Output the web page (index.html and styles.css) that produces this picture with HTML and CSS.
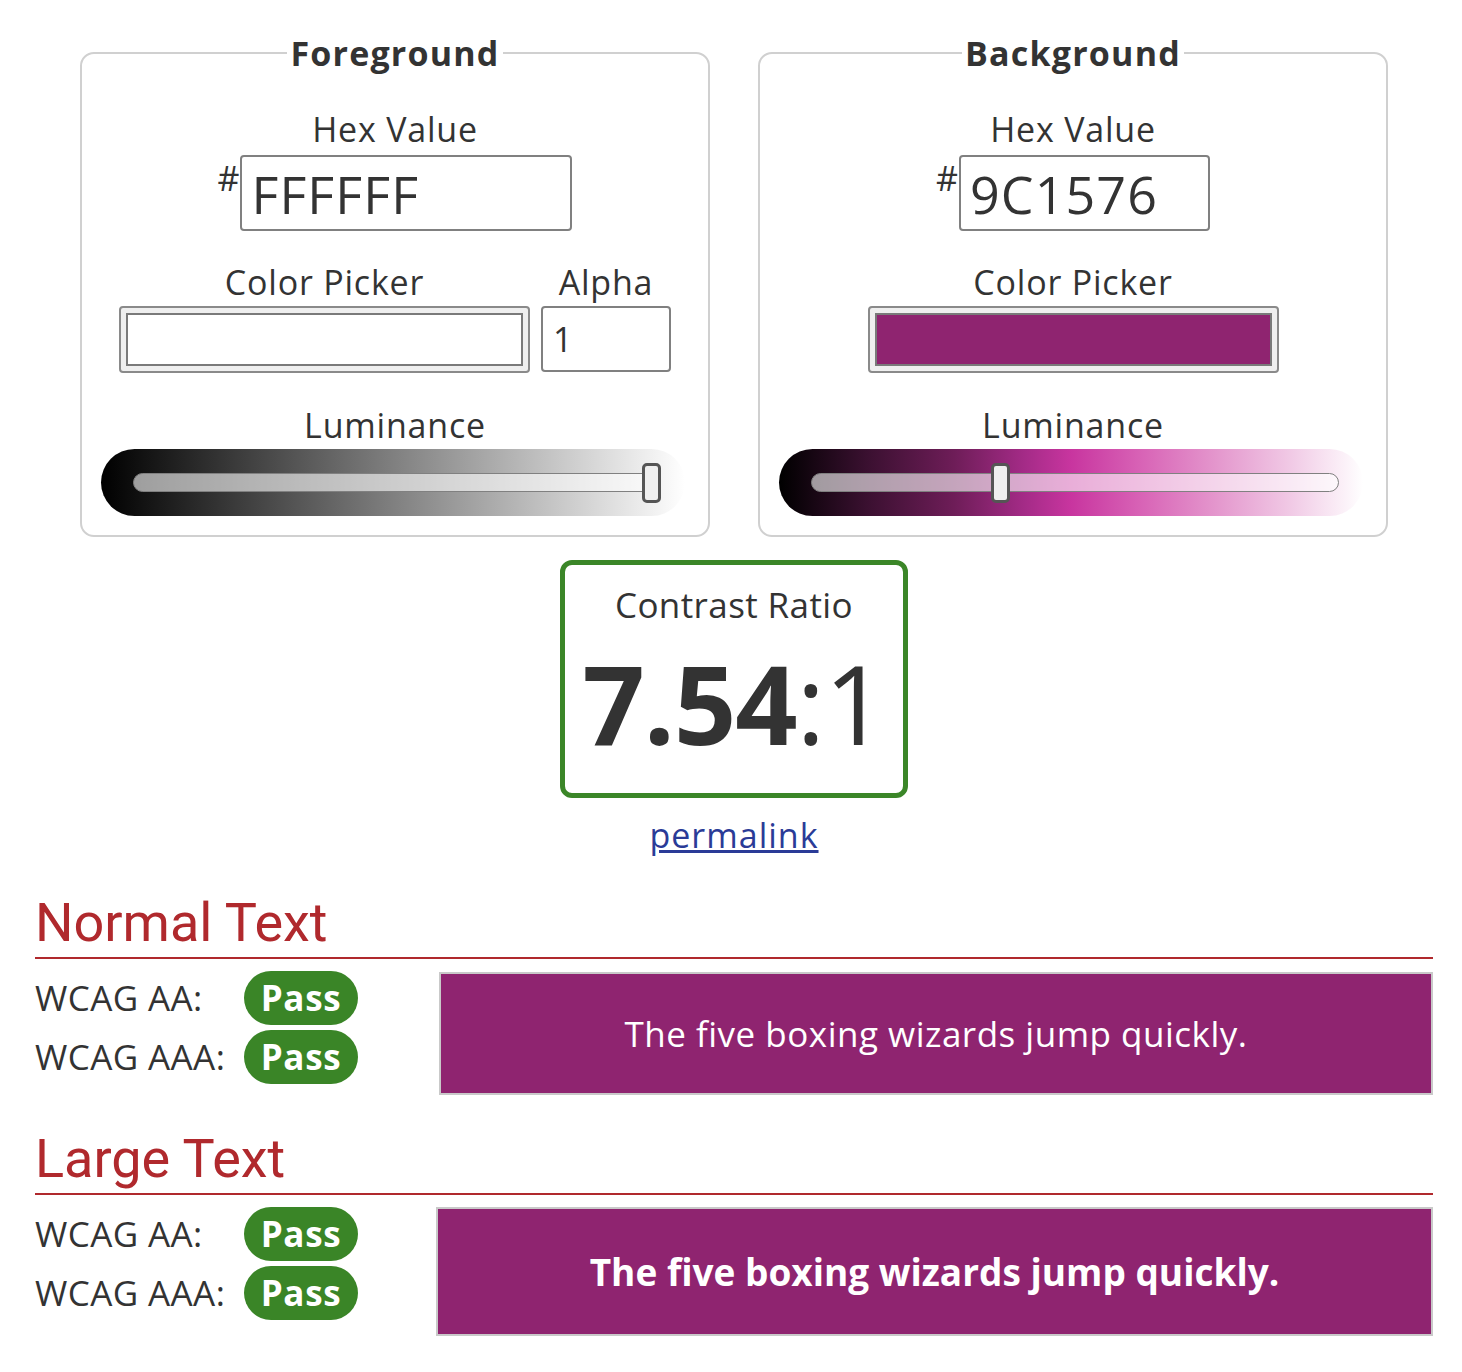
FILE: index.html
```html
<!DOCTYPE html>
<html lang="en">
<head>
<meta charset="utf-8">
<title>Contrast Checker</title>
<link rel="stylesheet" href="styles.css">
</head>
<body>
<div class="page">
  <div class="pickers">
    <fieldset class="panel panel-fg">
      <legend>Foreground</legend>
      <div class="label">Hex Value</div>
      <div class="hex-row"><span class="hash">#</span><input class="hex hex-fg" type="text" value="FFFFFF" aria-label="Foreground hex value"></div>
      <div class="picker-row">
        <div class="col">
          <div class="label">Color Picker</div>
          <div class="swatch"><div class="swatch-inner swatch-white"></div></div>
        </div>
        <div class="col">
          <div class="label">Alpha</div>
          <input class="alpha" type="text" value="1" aria-label="Alpha">
        </div>
      </div>
      <div class="label lum-label">Luminance</div>
      <div class="slider slider-fg"><div class="track"><div class="thumb" style="left:508px"></div></div></div>
    </fieldset>
    <fieldset class="panel panel-bg">
      <legend>Background</legend>
      <div class="label">Hex Value</div>
      <div class="hex-row"><span class="hash">#</span><input class="hex hex-bg" type="text" value="9C1576" aria-label="Background hex value"></div>
      <div class="picker-row">
        <div class="col">
          <div class="label">Color Picker</div>
          <div class="swatch"><div class="swatch-inner swatch-purple"></div></div>
        </div>
      </div>
      <div class="label lum-label">Luminance</div>
      <div class="slider slider-bg"><div class="track"><div class="thumb" style="left:179px"></div></div></div>
    </fieldset>
  </div>

  <div class="ratio-box">
    <div class="ratio-title">Contrast Ratio</div>
    <div class="ratio-value">7.54<span class="ratio-rest">:1</span></div>
  </div>
  <div class="permalink-wrap"><a class="permalink" href="#">permalink</a></div>

  <h2 class="result-head">Normal Text</h2>
  <div class="result">
    <div class="grades">
      <div class="grade-label">WCAG AA:</div><div class="badge">Pass</div>
      <div class="grade-label">WCAG AAA:</div><div class="badge">Pass</div>
    </div>
    <div class="sample sample-normal">The five boxing wizards jump quickly.</div>
  </div>

  <h2 class="result-head result-head-large">Large Text</h2>
  <div class="result">
    <div class="grades grades-large">
      <div class="grade-label">WCAG AA:</div><div class="badge">Pass</div>
      <div class="grade-label">WCAG AAA:</div><div class="badge">Pass</div>
    </div>
    <div class="sample sample-large">The five boxing wizards jump quickly.</div>
  </div>
</div>
</body>
</html>
```

FILE: styles.css
```css
body {
  margin: 0;
  background: #fff;
  color: #333;
  font-family: "Open Sans", "Liberation Sans", sans-serif;
}

.page {
  width: 1398px;
  padding: 30px 0 0 35px;
}

.pickers {
  display: flex;
  justify-content: center;
  gap: 48px;
}

.panel {
  width: 630px;
  min-width: 0;
  box-sizing: border-box;
  margin: 0;
  padding: 30px 0 19px;
  border: 2px solid #d0d0d0;
  border-radius: 14px;
}

.panel legend {
  margin: 0 auto;
  padding: 0 3px;
  font-size: 34px;
  line-height: 46px;
  font-weight: 700;
  letter-spacing: 1.2px;
  color: #333;
}

.label {
  font-size: 34px;
  line-height: 46px;
  letter-spacing: 0.8px;
  text-align: center;
}

.hex-row {
  display: flex;
  justify-content: center;
  margin-top: 3px;
}

.hash {
  font-size: 34px;
  line-height: 46px;
  margin-right: 1px;
}

.hex {
  height: 76px;
  box-sizing: border-box;
  margin: 0;
  padding: 0 0 0 9px;
  border: 2px solid #808080;
  border-radius: 4px;
  font-family: "Open Sans", "Liberation Sans", sans-serif;
  font-size: 52px;
  letter-spacing: 1.1px;
  color: #333;
  background: #fff;
  outline: none;
}

.hex-fg { width: 332px; }
.hex-bg { width: 251px; }

.picker-row {
  display: flex;
  justify-content: center;
  gap: 11px;
  margin-top: 28px;
}

.col {
  display: flex;
  flex-direction: column;
  align-items: center;
}

.col .label {
  margin-bottom: 1px;
}

.swatch {
  width: 411px;
  height: 67px;
  box-sizing: border-box;
  padding: 5px 5px;
  border: 2px solid #8a8a8a;
  border-radius: 4px;
  background: #efefef;
}

.swatch-inner {
  height: 100%;
  box-sizing: border-box;
  border: 2px solid #7a7a7a;
}

.swatch-white { background: #fff; }
.swatch-purple { background: #8f2470; }

.alpha {
  width: 130px;
  height: 66px;
  box-sizing: border-box;
  margin: 0;
  padding: 0 0 0 10px;
  border: 2px solid #808080;
  border-radius: 4px;
  font-family: "Open Sans", "Liberation Sans", sans-serif;
  font-size: 34px;
  color: #333;
  background: #fff;
  outline: none;
}

.lum-label {
  margin-top: 29px;
}

.slider {
  width: 584px;
  height: 67px;
  box-sizing: border-box;
  margin: 1px 0 0 19px;
  padding-left: 32px;
  border-radius: 34px;
  display: flex;
  align-items: center;
}

.slider-fg {
  background: linear-gradient(to right, #000 0%, #fff 100%);
}

.slider-bg {
  background: linear-gradient(to right, #000 0%, #3a1030 15%, #6e1d58 30%, #a42b87 42%, #c8359f 50%, #d863b6 62%, #e497cd 75%, #f1cbe6 88%, #fff 100%);
}

.track {
  position: relative;
  width: 528px;
  height: 19px;
  box-sizing: border-box;
  border: 1px solid #808080;
  border-radius: 10px;
  background: rgba(255, 255, 255, 0.6);
}

.thumb {
  position: absolute;
  top: 50%;
  width: 19px;
  height: 40px;
  margin-top: -20px;
  box-sizing: border-box;
  border: 3px solid #555;
  border-radius: 5px;
  background: #efefef;
}

.ratio-box {
  width: 348px;
  height: 238px;
  box-sizing: border-box;
  margin: 23px auto 0;
  padding-top: 16px;
  border: 5px solid #3b8628;
  border-radius: 12px;
  text-align: center;
}

.ratio-title {
  font-size: 35px;
  line-height: 48px;
  letter-spacing: 0.4px;
}

.ratio-value {
  margin-top: 19px;
  font-size: 109px;
  line-height: 109px;
  font-weight: 700;
  letter-spacing: -1px;
}

.ratio-rest {
  font-weight: 400;
}

.permalink-wrap {
  margin-top: 14px;
  text-align: center;
}

.permalink {
  font-size: 34px;
  line-height: 46px;
  letter-spacing: 1px;
  color: #2a3b97;
  text-decoration: underline;
}

.result-head {
  margin: 32px 0 0;
  padding-bottom: 1px;
  border-bottom: 2px solid #b0292d;
  font-family: Roboto, "Liberation Sans", sans-serif;
  font-weight: 400;
  font-size: 54px;
  line-height: 66px;
  color: #b0292d;
}

.result-head-large {
  margin-top: 31px;
}

.result {
  display: flex;
  margin-top: 12px;
}

.grades {
  width: 404px;
  flex: none;
  display: grid;
  grid-template-columns: 209px auto;
  row-gap: 5px;
  align-content: start;
  align-items: center;
}

.grades-large {
  width: 401px;
}

.grade-label {
  font-size: 35px;
  line-height: 54px;
  letter-spacing: 0.4px;
  white-space: nowrap;
}

.badge {
  justify-self: start;
  width: 114px;
  height: 54px;
  border-radius: 27px;
  background: #3a8527;
  color: #fff;
  font-size: 35px;
  line-height: 54px;
  font-weight: 700;
  letter-spacing: 0.7px;
  text-align: center;
}

.sample {
  flex: 1;
  box-sizing: border-box;
  border: 2px solid #c9c9c9;
  background: #8f2470;
  color: #fff;
  display: flex;
  align-items: center;
  justify-content: center;
}

.sample-normal {
  margin-top: 1px;
  height: 123px;
  font-size: 35px;
  letter-spacing: 0.5px;
}

.sample-large {
  height: 129px;
  font-size: 37px;
  font-weight: 700;
}
```
